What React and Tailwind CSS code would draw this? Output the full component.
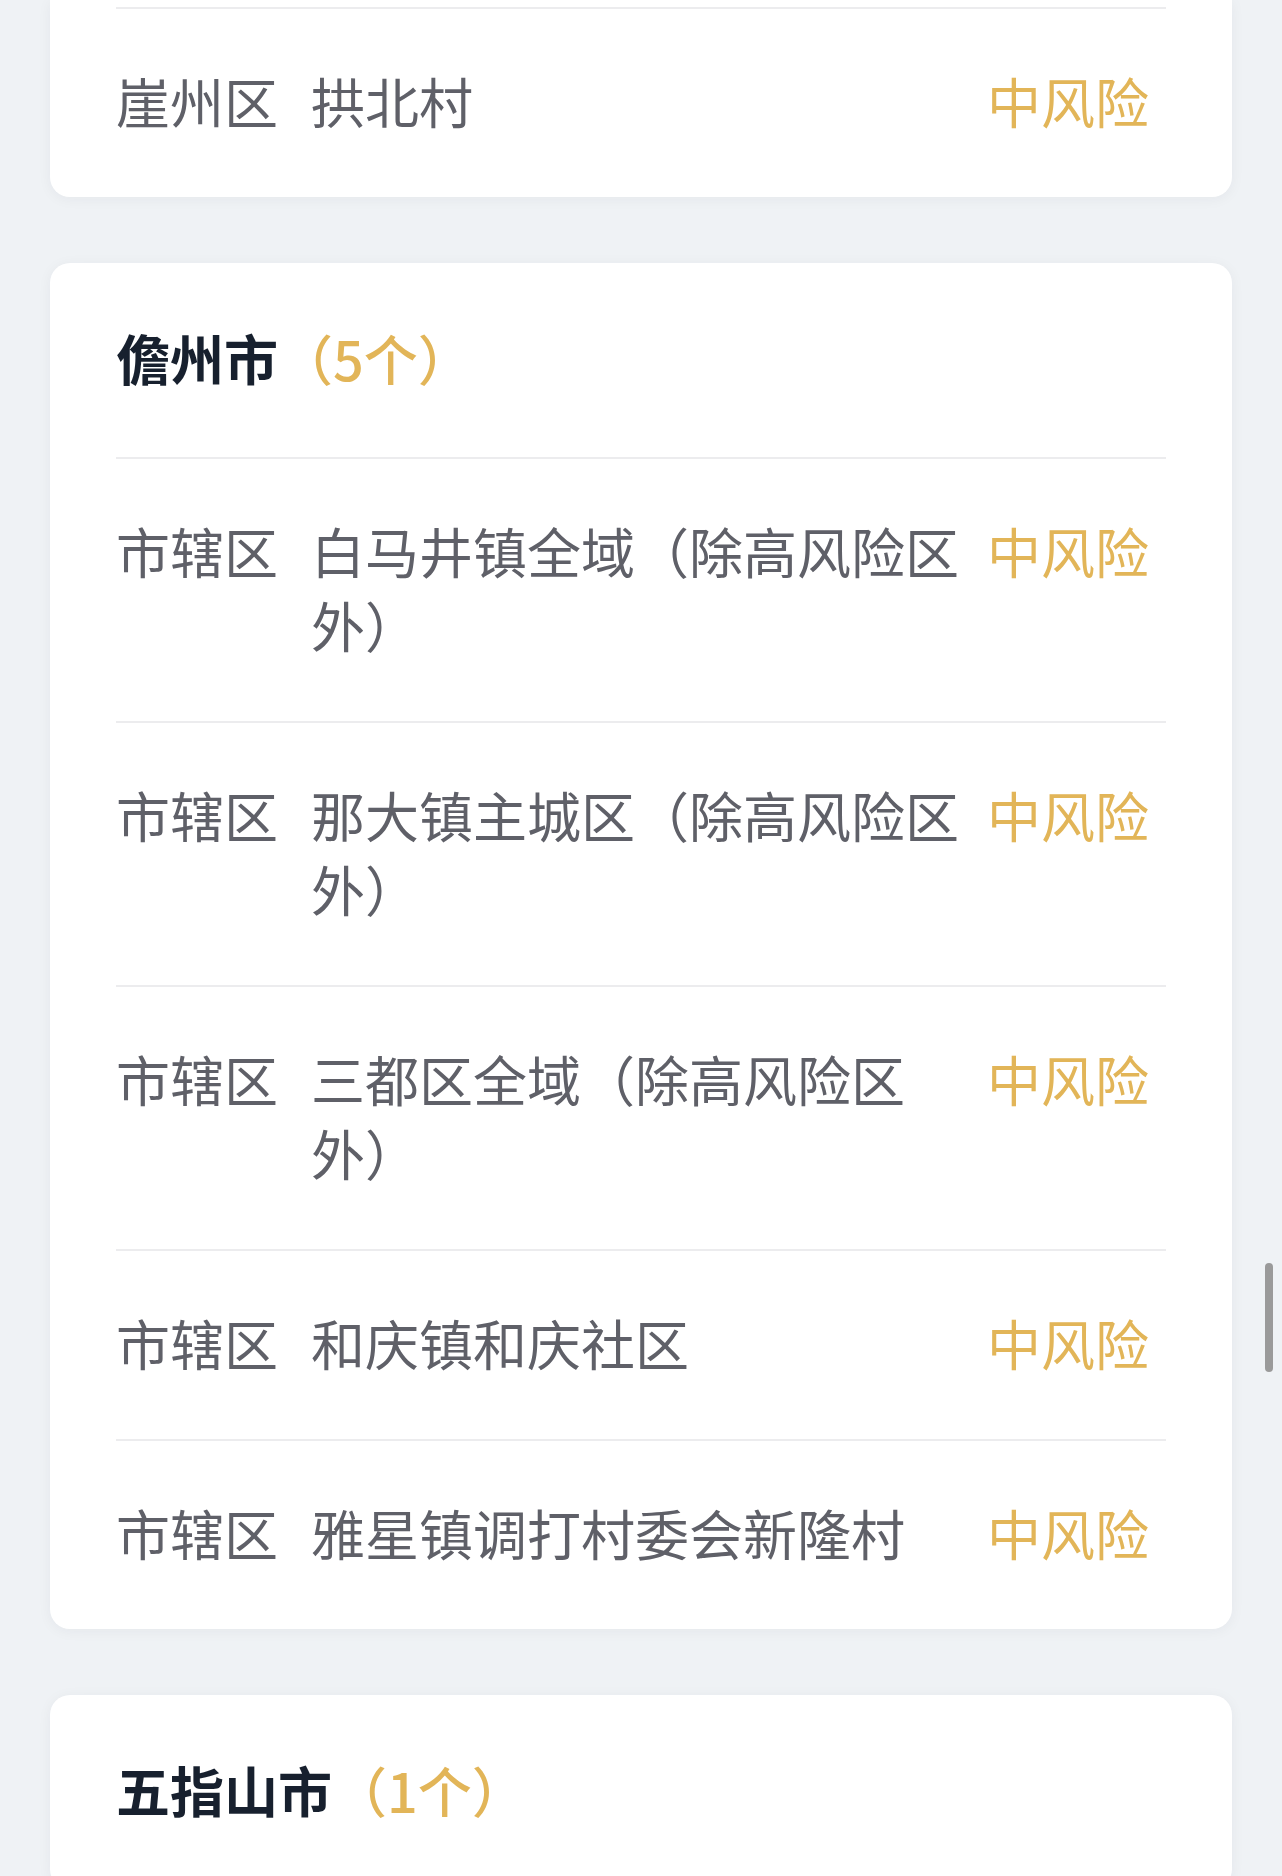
import React from "react";

const FONT = { fontFamily: '"Noto Sans CJK SC", "Noto Sans", sans-serif' };

const cities = [
  {
    name: "儋州市",
    count: 5,
    rows: [
      { district: "市辖区", place: "白马井镇全域（除高风险区外）" },
      { district: "市辖区", place: "那大镇主城区（除高风险区外）" },
      { district: "市辖区", place: "三都区全域（除高风险区外）" },
      { district: "市辖区", place: "和庆镇和庆社区" },
      { district: "市辖区", place: "雅星镇调打村委会新隆村" },
    ],
  },
  { name: "五指山市", count: 1, rows: [] },
];

function AreaRow({ district, place }) {
  return (
    <div className="flex items-start border-t-2 border-[#ececee] pt-[55px] pb-[59px] text-[54px] leading-[74px]">
      <span className="w-[162px] shrink-0 text-[#5f6068]">{district}</span>
      <span className="ml-[33px] w-[670px] shrink-0 text-[#5f6068]">{place}</span>
      <span className="ml-auto mr-[17px] shrink-0 text-[#e2b558]">中风险</span>
    </div>
  );
}

function CityCard({ city }) {
  return (
    <div className="rounded-[20px] bg-white px-[66px] shadow-[0_2px_14px_rgba(30,40,60,0.05)]">
      <div className="flex items-center pt-[58px] pb-[62px] text-[54px] leading-[74px]">
        <span className="font-bold text-[#17202e]">{city.name}</span>
        <span className="ml-[1px] font-medium text-[#e2b558]">（{city.count}个）</span>
      </div>
      {city.rows.map((r, i) => (
        <AreaRow key={i} {...r} />
      ))}
    </div>
  );
}

export default function App() {
  return (
    <div className="relative h-[1876px] overflow-hidden bg-[#eff2f5]" style={FONT}>
      <div className="flex flex-col gap-[66px] px-[50px]">
        {/* tail of the previous card, scrolled off the top */}
        <div className="rounded-b-[20px] bg-white px-[66px] pt-[7px] shadow-[0_2px_14px_rgba(30,40,60,0.05)]">
          <AreaRow district="崖州区" place="拱北村" />
        </div>
        {cities.map((c) => (
          <CityCard key={c.name} city={c} />
        ))}
      </div>
      {/* scroll indicator */}
      <div className="absolute left-[1265px] top-[1263px] h-[109px] w-[8px] rounded-full bg-[#9a9a9a]" />
    </div>
  );
}
